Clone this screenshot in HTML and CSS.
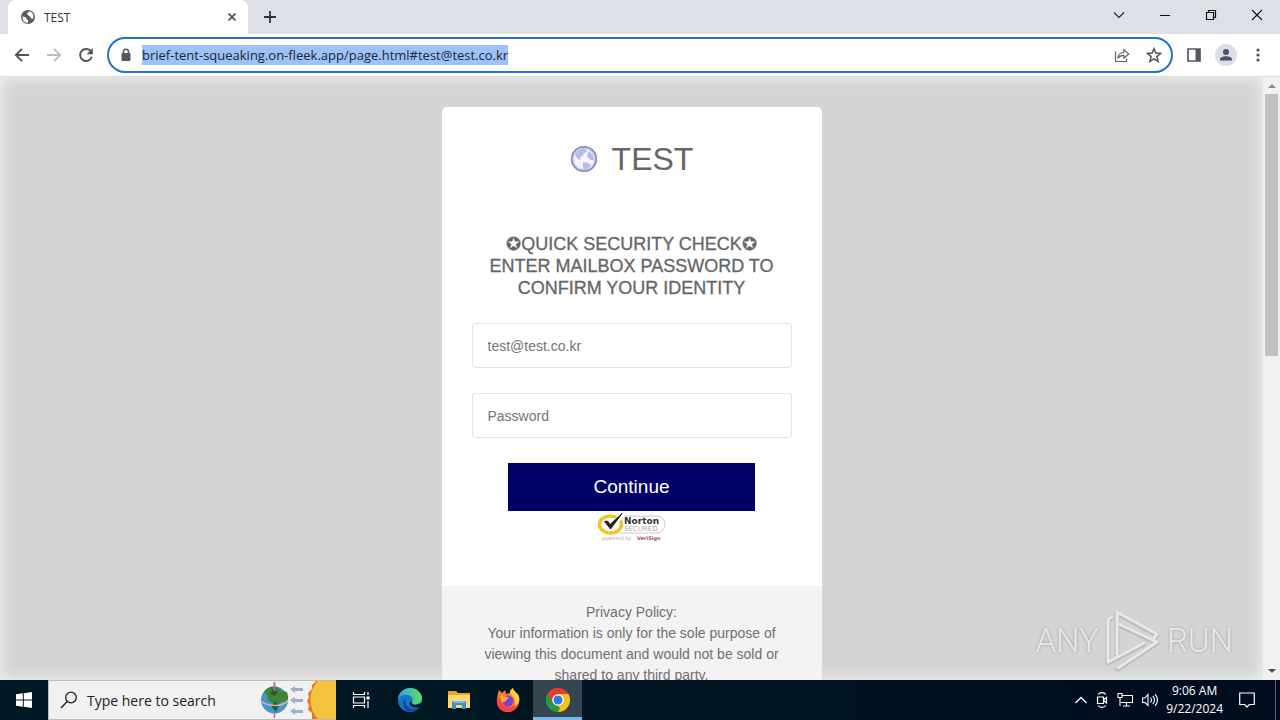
FILE: index.html
```html
<!DOCTYPE html>
<html lang="en">
<head>
<meta charset="utf-8">
<meta name="viewport" content="width=device-width, initial-scale=1">
<title>TEST</title>
<link rel="stylesheet" href="styles.css">
</head>
<body>
<div class="desktop">
  <header class="tabstrip">
    <div class="tab">
      <svg class="favicon" viewBox="0 0 16 16" width="16" height="16" aria-hidden="true"><circle cx="8" cy="8" r="7" fill="#5a5e63"/><path d="M2.500 7.500c2 .2 4 .8 4.200 2.500L8 11v2.800C4.500 14 2 11 2.500 7.500zM9 2.200c-.3 1.600-2.300 1.500-2 3.100 1.600 0 1.200 1.800 2.600 1.900 1 .3.700 1.500 1.600 2.100l1.600.8c2-4-.3-7-3.800-7.900z" fill="#fff"/></svg>
      <span class="tab-title">TEST</span>
      <button class="icon-btn tab-close" type="button" aria-label="Close tab"><svg viewBox="0 0 10 10" width="10" height="10"><path d="M1.500 1.500l7 7M8.500 1.500l-7 7" stroke="#45494d" stroke-width="1.700"/></svg></button>
    </div>
    <button class="icon-btn new-tab" type="button" aria-label="New tab"><svg viewBox="0 0 12 12" width="12" height="12"><path d="M6 0v12M0 6h12" stroke="#303236" stroke-width="1.800"/></svg></button>
    <div class="window-controls">
      <button class="icon-btn win-btn" type="button" aria-label="Search tabs"><svg viewBox="0 0 12 12" width="12" height="12"><path d="M1 3.500l5 5 5-5" fill="none" stroke="#222" stroke-width="1.100"/></svg></button>
      <button class="icon-btn win-btn" type="button" aria-label="Minimize"><svg viewBox="0 0 12 12" width="12" height="12"><path d="M1 6.500h10" stroke="#111"/></svg></button>
      <button class="icon-btn win-btn" type="button" aria-label="Restore"><svg viewBox="0 0 12 12" width="12" height="12"><path d="M1.500 3.500h7v7h-7zM3.500 3.500v-2h7v7h-2" fill="none" stroke="#111" stroke-width="1.200"/></svg></button>
      <button class="icon-btn win-btn" type="button" aria-label="Close"><svg viewBox="0 0 12 12" width="12" height="12"><path d="M1 1l10 10M11 1L1 11" stroke="#111" stroke-width="1.100"/></svg></button>
    </div>
  </header>

  <div class="toolbar">
    <div class="nav">
      <button class="icon-btn" type="button" aria-label="Back"><svg viewBox="0 0 16 16" width="16" height="16"><path d="M15 8H2M8 1.800L1.800 8 8 14.200" fill="none" stroke="#505357" stroke-width="1.900"/></svg></button>
      <button class="icon-btn" type="button" aria-label="Forward"><svg viewBox="0 0 16 16" width="16" height="16"><path d="M1 8h13M8 1.800L14.200 8 8 14.200" fill="none" stroke="#bbbdc0" stroke-width="1.900"/></svg></button>
      <button class="icon-btn" type="button" aria-label="Reload"><svg viewBox="0 0 16 16" width="16" height="16"><path d="M13 4.500A6 6 0 1 0 13.800 9.800" fill="none" stroke="#505357" stroke-width="1.900"/><path d="M14.800 1v6.200H8.600z" fill="#505357"/></svg></button>
    </div>
    <div class="omnibox">
      <svg viewBox="0 0 10 14" width="10" height="14" aria-hidden="true"><path d="M2.500 6V3.700a2.500 2.500 0 0 1 5 0V6" fill="none" stroke="#55585c" stroke-width="1.500"/><rect x="0.500" y="5" width="9" height="8" rx="1" fill="#55585c"/></svg>
      <span class="url">brief-tent-squeaking.on-fleek.app/page.html#test@test.co.kr</span>
      <button class="icon-btn share" type="button" aria-label="Share"><svg viewBox="0 0 16 16" width="16" height="16"><path d="M1.500 4.500v10h11v-3" fill="none" stroke="#5f6368" stroke-width="1.200"/><path d="M3.800 11.200c.5-4 2.700-5.600 6-5.700V2.600L14.700 7l-4.900 4.200V8.400c-2.500 0-4.300.6-6 2.800z" fill="none" stroke="#5f6368" stroke-width="1.200" stroke-linejoin="round"/></svg></button>
      <button class="icon-btn" type="button" aria-label="Bookmark"><svg viewBox="0 0 16 16" width="16" height="16"><path d="M8 1.700l1.800 4.400 4.800.4-3.700 3.100 1.200 4.700L8 11.800l-4.100 2.500 1.200-4.700-3.700-3.100 4.800-.4z" fill="none" stroke="#505357" stroke-width="1.500"/></svg></button>
    </div>
    <button class="icon-btn" type="button" aria-label="Side panel"><svg viewBox="0 0 14 14" width="14" height="14"><path d="M1 1h12v12H1z" fill="none" stroke="#55585e" stroke-width="1.700"/><path d="M8.500 1H13v12H8.500z" fill="#55585e"/></svg></button>
    <button class="icon-btn" type="button" aria-label="Profile"><svg viewBox="0 0 22 22" width="22" height="22"><circle cx="11" cy="11" r="11" fill="#dbdfe7"/><circle cx="11" cy="8" r="3" fill="#4a5168"/><path d="M5 16.500v-1.300c0-2 3.500-3 6-3s6 1 6 3v1.300z" fill="#4a5168"/></svg></button>
    <button class="icon-btn menu" type="button" aria-label="Menu"><svg viewBox="0 0 4 14" width="4" height="14"><circle cx="2" cy="2" r="1.600" fill="#505357"/><circle cx="2" cy="7" r="1.600" fill="#505357"/><circle cx="2" cy="12" r="1.600" fill="#505357"/></svg></button>
  </div>

  <div class="viewport">
    <main class="page">
      <section class="card">
        <div class="card-body">
          <h1 class="brand">
            <svg viewBox="0 0 28 28" width="28" height="28" aria-hidden="true"><circle cx="14" cy="14" r="12.200" fill="#f3f5ff" stroke="#8389b5" stroke-width="1.800"/><path d="M6 7l4-3 6 0 1 3-3 1-1 3-3 1 1 3-3-1-3-4zM19 6l4 4 1 5-3 0-3-2-1-3zM13 17l5 1 3 2-3 4-4 1-1-4z" fill="#b4bde6"/><circle cx="14" cy="14" r="10.700" fill="none" stroke="#c6ccf0" stroke-width="1.200"/></svg>
            <span>TEST</span>
          </h1>
          <h2 class="notice">✪QUICK SECURITY CHECK✪<br>ENTER MAILBOX PASSWORD TO<br>CONFIRM YOUR IDENTITY</h2>
          <input class="field" type="text" aria-label="Email" placeholder="test@test.co.kr" autocomplete="off">
          <input class="field" type="password" aria-label="Password" placeholder="Password" autocomplete="off">
          <button class="continue" type="button">Continue</button>
          <svg class="seal" viewBox="0 0 70 30" width="70" height="30" role="img" aria-label="Norton Secured powered by VeriSign">
            <rect x="14" y="5" width="54" height="17" rx="8.500" fill="#fff" stroke="#c8ccca"/>
            <ellipse cx="13.500" cy="13.500" rx="11" ry="8.500" fill="#fff" stroke="#f1c524" stroke-width="3.500"/>
            <path d="M7.500 11l5 6L26 3" fill="none" stroke="#fff" stroke-width="5"/>
            <path d="M7.500 10.500L10.500 10l2.500 3.500L25 2.500 13.500 18z" fill="#222" stroke="#222"/>
            <text class="seal-name" x="27" y="13">Norton</text>
            <text class="seal-sub" x="27" y="19.500">SECURED</text>
            <text class="seal-by" x="5" y="29">powered by</text>
            <text class="seal-vs" x="40" y="29">VeriSign</text>
          </svg>
        </div>
        <p class="policy">Privacy Policy:<br>Your information is only for the sole purpose of<br>viewing this document and would not be sold or<br>shared to any third party.</p>
      </section>
      <div class="watermark">
        <span>ANY</span>
        <svg viewBox="0 0 56 64" width="56" height="64" aria-hidden="true"><g fill="none" stroke-linecap="round" stroke-linejoin="round"><path d="M7 9L3 11v43l36-19M12 46V4l40 22-3 4M12 15l40 19-39 26" stroke="#bcbcbc" stroke-width="5"/><path d="M7 8L3 10v43l36-19M12 45V3l40 22-3 4M12 14l40 19-39 26" stroke="#e8e8e8" stroke-width="3"/></g></svg>
        <span>RUN</span>
      </div>
    </main>
    <div class="scrollbar" aria-hidden="true">
      <svg viewBox="0 0 8 4" width="8" height="4"><path d="M0 4l4-4 4 4z" fill="#8a8a8a"/></svg>
      <div class="track"><div class="thumb"></div></div>
      <svg viewBox="0 0 8 4" width="8" height="4"><path d="M0 0h8L4 4z" fill="#505050"/></svg>
    </div>
  </div>

  <footer class="taskbar">
    <button class="icon-btn start" type="button" aria-label="Start"><svg viewBox="0 0 16 16" width="16" height="16"><path d="M0 2.300l6.800-1v6.200H0zM7.800 1.200L16 0v7.500H7.800zM0 8.500h6.800v6.200L0 13.700zM7.800 8.500H16V16l-8.200-1.200z" fill="#fff"/></svg></button>
    <button class="search" type="button">
      <svg viewBox="0 0 18 18" width="18" height="18" aria-hidden="true"><circle cx="11" cy="6.500" r="5.300" fill="none" stroke="#222" stroke-width="1.300"/><path d="M7.200 10.500L1 17" stroke="#222" stroke-width="1.400"/></svg>
      <span>Type here to search</span>
      <svg class="doodle" viewBox="0 0 76 38" width="76" height="38" aria-hidden="true"><path d="M14.500 1v36" stroke="#cf7370" stroke-width="1.500"/><circle cx="14.500" cy="19" r="13.500" fill="#4c93c9"/><path d="M4 11C8 5 13 5 17 6l5 4 5 1c2 6 1 10-1 11l-4-2-3 4-3-3-4 1-4-3-1-5z" fill="#408437"/><path d="M14 20l5 4-3 7-4-5zM13 8l5 3-3 4-5-2z" fill="#215f3c"/><path d="M1 20c5 5 22 7 27-1" fill="none" stroke="#d9b3aa" stroke-width="1.500"/><path d="M14.500 1v9" stroke="#cf7370" stroke-width="1.500"/><path d="M30 8l5-3v2h8v3h-8v2zM30 19l5-3v2h8v3h-8v2zM30 30l5-3v2h8v3h-8v2z" fill="#9eafca"/><path d="M56 0l-4 4 0 4-4 4 1 4-2 4 2 4-1 5 4 3 0 6h24V0z" fill="#e77b25"/><path d="M58 0c-10 11-10 27 0 38h18V0z" fill="#f6c33c"/></svg>
    </button>
    <button class="icon-btn task" type="button" aria-label="Task view"><svg viewBox="0 0 18 16" width="18" height="16"><path d="M1.500 0v2.500h11V0M1.500 16v-2.500h11V16M1.500 5h11v6h-11zM16 0v3M16 9v7" fill="none" stroke="#fff" stroke-width="1.200"/><path d="M14.500 4.500h3v3h-3z" fill="#fff"/></svg></button>
    <button class="icon-btn task" type="button" aria-label="Edge"><svg viewBox="0 0 24 24" width="24" height="24"><defs><linearGradient id="eg" x1="0" x2="1"><stop offset="0" stop-color="#2aa5df"/><stop offset="1" stop-color="#68dc62"/></linearGradient></defs><circle cx="12" cy="12" r="12" fill="#1775cb"/><path d="M0 11C1 4 6 0 12 0c7 0 12 5 12 10 0 4-3 6-7 6-3 0-4-1-3-2 2-3 0-6-4-7C6 6 2 8 0 11z" fill="url(#eg)"/><path d="M8 10c-2 5 1 10 7 11 3 0 5-1 7-3-3 5-8 7-13 5C4 20 4 13 8 10z" fill="#124a94"/><path d="M14 14c-1 2 1 3 4 3l6-2v3l-2 1c-3 1-8 1-10-2-1-2 0-4 2-3z" fill="#001822"/></svg></button>
    <button class="icon-btn task" type="button" aria-label="File Explorer"><svg viewBox="0 0 22 20" width="22" height="20"><path d="M0 1h8l2 2h12v15H0z" fill="#e8a82f"/><path d="M0 5h22v13H0z" fill="#fbd873"/><path d="M4 19v-8h14v8h-4v-4H8v4z" fill="#3f8dcb"/><path d="M5 11h12v2H5z" fill="#72b9e6"/></svg></button>
    <button class="icon-btn task" type="button" aria-label="Firefox"><svg viewBox="0 0 24 24" width="24" height="24"><path d="M2 5l1-3 3 3 3-3 1 4 4-1c0-3 2-4 3-5 0 3 5 5 6 9 2 8-4 15-11 15S0 19 1 11z" fill="#ff7a2b"/><path d="M1 12c0 8 5 12 11 12s12-5 11-14c-2 8-6 10-11 9S5 14 4 9z" fill="#fc3d4e"/><path d="M14 5c0-3 2-4 3-5 0 3 5 5 6 9 1 4-1 8-4 9 1-6-1-9-5-13z" fill="#ffd43b"/><circle cx="12" cy="13" r="5.500" fill="#7b40d8"/><path d="M4 9c3-2 5-1 6 0h3c-1 2-3 2-3 4 0 1-3 0-4 2z" fill="#ffad28"/></svg></button>
    <button class="icon-btn task active" type="button" aria-label="Chrome"><svg viewBox="0 0 24 24" width="24" height="24"><path d="M12 12L1.600 6A12 12 0 0 1 22.400 6z" fill="#e33b2e"/><path d="M12 12L22.400 6A12 12 0 0 1 12 24z" fill="#fbc116"/><path d="M12 12v12A12 12 0 0 1 1.600 6z" fill="#279847"/><path d="M12 6h10.400L17 15l-5 9-1-6z" fill="#fbc116"/><path d="M1.600 6L7 15l5 3 2 2-2 4A12 12 0 0 1 1.600 6z" fill="#279847"/><path d="M1.600 6A12 12 0 0 1 22.400 6H12L7 15z" fill="#e33b2e"/><circle cx="12" cy="12" r="5.800" fill="#fff"/><circle cx="12" cy="12" r="4.500" fill="#2d79e5"/></svg></button>
    <div class="tray">
      <svg viewBox="0 0 12 8" width="12" height="8" aria-hidden="true"><path d="M.5 7L6 1.500 11.500 7" fill="none" stroke="#fff" stroke-width="1.300"/></svg>
      <svg viewBox="0 0 12 16" width="12" height="16" aria-hidden="true"><path d="M1.500 5h6v6.500h-6zM7.500 8l3-2.500v5.500l-3-2.500M2 2.500C4 0 8 0 10 2.500M2 13.500c2 2.500 6 2.500 8 0" fill="none" stroke="#fff" stroke-width="1.200"/></svg>
      <svg viewBox="0 0 16 14" width="16" height="14" aria-hidden="true"><path d="M5 2.500h10.500v7H4M1 .5h4v4H1zM3 4.500V13M9.500 9.500V13M6 13h7" fill="none" stroke="#fff" stroke-width="1.100"/></svg>
      <svg viewBox="0 0 16 14" width="16" height="14" aria-hidden="true"><path d="M.6 5h2.400l3-3.500v11L3 9.500H.6zM8.500 4.500q2 2.500 0 5M10.800 2.800q3.400 4.200 0 8.400M13 1.200q5 5.800 0 11.600" fill="none" stroke="#fff" stroke-width="1.100"/></svg>
      <time class="clock" datetime="2024-09-22T09:06">9:06 AM<br>9/22/2024</time>
      <svg class="action" viewBox="0 0 16 16" width="16" height="16" aria-hidden="true"><path d="M.7 1h14.600v11.500h-5L8 15l-2.300-2.500h-5z" fill="none" stroke="#fff" stroke-width="1.200"/></svg>
    </div>
  </footer>
</div>
</body>
</html>
```
FILE: styles.css
```css
* { box-sizing: border-box; }

body {
  margin: 0;
  font-family: "Open Sans", "Noto Sans", sans-serif;
  font-size: 12px;
  color: #333;
}

.desktop {
  display: flex;
  flex-direction: column;
  height: 100vh;
  overflow: hidden;
}

svg { display: block; flex: none; }

.icon-btn {
  display: flex;
  align-items: center;
  justify-content: center;
  flex: none;
  padding: 0;
  border: 0;
  background: none;
}

/* Browser chrome */
.tabstrip {
  display: flex;
  align-items: center;
  height: 34px;
  flex: none;
  padding-left: 8px;
  background: #dde0e6;
}

.tab {
  display: flex;
  align-items: center;
  align-self: stretch;
  gap: 8px;
  width: 240px;
  padding: 0 11px 0 12px;
  border-radius: 8px 8px 0 0;
  background: #fff;
}

.tab-title { flex: 1; }

.new-tab { margin-left: 16px; }

.window-controls {
  display: flex;
  align-self: stretch;
  align-items: center;
  margin-left: auto;
  padding-bottom: 5px;
}

.win-btn { width: 46px; }

.toolbar {
  display: flex;
  align-items: center;
  gap: 14px;
  height: 43px;
  flex: none;
  padding: 0 20px 0 14px;
  border-bottom: 1px solid #dcdcdc;
  background: #fff;
}

.nav {
  display: flex;
  gap: 16px;
  margin-right: -1px;
}

.omnibox {
  display: flex;
  align-items: center;
  flex: 1;
  height: 36px;
  padding: 0 9px 0 12px;
  border: 2px solid #2670cf;
  border-radius: 18px;
}

.url {
  margin-left: 11px;
  background: #9dc3f6;
  color: #1b2638;
  font-size: 13px;
  line-height: 20px;
}

.share { margin: 0 16px 0 auto; }

.menu { margin-left: 5px; }

/* Page */
.viewport {
  display: flex;
  flex: 1;
  min-height: 0;
}

.page {
  position: relative;
  flex: 1;
  padding-top: 30px;
  overflow: hidden;
  background: #d4d4d4;
  box-shadow: inset 0 0 16px #f4f4f4;
  font-family: "Liberation Sans", Arial, sans-serif;
  color: #666;
}

.card {
  width: 380px;
  margin: 0 auto;
  border-radius: 5px;
  background: #fff;
}

.card-body {
  display: flex;
  flex-direction: column;
  align-items: center;
  padding: 32px 30px 45px;
}

.brand {
  display: flex;
  align-items: center;
  gap: 14px;
  margin: 0;
  font-size: 32px;
  font-weight: 400;
  line-height: 40px;
}

.notice {
  margin: 54px 0 24px;
  font-size: 18px;
  font-weight: 400;
  line-height: 22px;
  text-align: center;
  -webkit-text-stroke: 0.3px #666;
}

.field {
  width: 100%;
  height: 45px;
  margin-bottom: 25px;
  padding: 0 15px;
  border: 1px solid #e3e3e3;
  border-radius: 3px;
  background: #fff;
  font: 14px "Liberation Sans", Arial, sans-serif;
  color: #666;
}

.field::placeholder { color: #757575; }

.continue {
  width: 247px;
  height: 48px;
  border: 0;
  background: #000066;
  color: #fff;
  font: 19px "Liberation Sans", Arial, sans-serif;
}

.seal {
  font-family: "DejaVu Sans", sans-serif;
}

.seal-name { font-size: 9px; font-weight: 700; fill: #333; }
.seal-sub { font-size: 7px; fill: #aaa; }
.seal-by { font-size: 5px; fill: #aaa; }
.seal-vs { font-size: 5px; font-weight: 700; fill: #b64c68; }

.policy {
  margin: 0;
  padding: 16px 20px;
  background: #f3f3f3;
  font-size: 14px;
  line-height: 21px;
  text-align: center;
  color: #707070;
}

.watermark {
  position: absolute;
  right: 30px;
  bottom: 7px;
  display: flex;
  align-items: center;
  gap: 6px;
  color: #e8e8e8;
  font-family: Roboto, sans-serif;
  font-size: 33px;
  font-weight: 300;
  line-height: 64px;
  text-shadow: 0 0 3px #999;
}

.scrollbar {
  display: flex;
  flex-direction: column;
  align-items: center;
  width: 17px;
  padding: 7px 0;
  background: #f1f1f1;
}

.track {
  flex: 1;
  width: 13px;
  margin: 6px 0;
}

.thumb {
  height: 46%;
  background: #c1c1c1;
}

/* Taskbar */
.taskbar {
  display: flex;
  align-items: stretch;
  height: 40px;
  flex: none;
  background: linear-gradient(90deg, #001922, #001420 60%, #000c1e);
  color: #fff;
}

.start { width: 48px; }

.search {
  display: flex;
  align-items: center;
  width: 288px;
  padding: 0 0 0 11px;
  border: 1px solid #bbb;
  border-right: 0;
  background: #f1f1f1;
  color: #222;
  font: 14px "Open Sans", "Noto Sans", sans-serif;
}

.search span { margin-left: 9px; }

.doodle { margin-left: auto; }

.task {
  width: 49px;
  border-bottom: 3px solid transparent;
  padding-top: 3px;
}

.active {
  margin-left: 1px;
  border-bottom-color: #76b9ed;
  background: #33464f;
}

.tray {
  display: flex;
  align-items: center;
  gap: 8px;
  margin-left: auto;
  margin-right: 4px;
  padding-right: 20px;
  border-right: 1px solid #59616b;
}

.tray svg + svg { margin-left: 1px; }

.clock {
  line-height: 18px;
  text-align: center;
}

.tray .action { margin-left: 8px; }
```
